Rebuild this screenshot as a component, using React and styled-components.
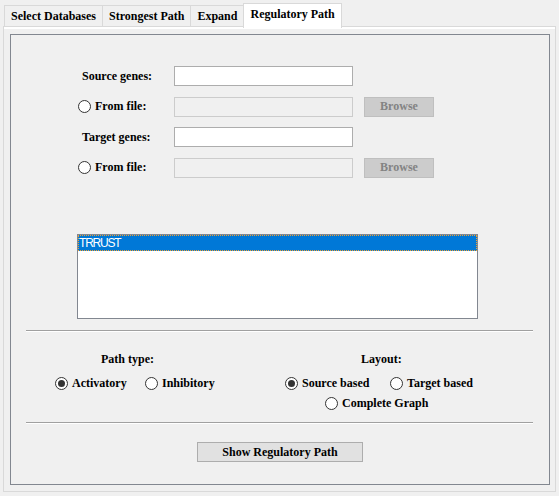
import React from 'react';
import styled, { createGlobalStyle } from 'styled-components';

const Global = createGlobalStyle`
  html, body { margin: 0; padding: 0; background: #f0f0f0; }
  body { font-family: "Liberation Serif", "Times New Roman", serif; color: #000; }
`;

const Window = styled.div`
  width: 559px;
  height: 496px;
  box-sizing: border-box;
  padding: 3px 0 4px;
  display: flex;
  flex-direction: column;
  background: #f0f0f0;
`;

const TabBar = styled.div`
  display: flex;
  align-items: flex-end;
  height: 24px;
  padding-left: 4px;
  position: relative;
  z-index: 2;
`;

const Tab = styled.div`
  box-sizing: border-box;
  height: ${p => (p.$active ? '25px' : '22px')};
  margin: ${p => (p.$active ? '0 0 -1px -1px' : '0 0 0 -1px')};
  padding: ${p => (p.$active ? '0 6px 3px' : '0 6px')};
  border: 1px solid #d9d9d9;
  border-bottom: ${p => (p.$active ? 'none' : '1px solid #d9d9d9')};
  background: ${p => (p.$active ? '#ffffff' : '#f0f0f0')};
  position: relative;
  z-index: ${p => (p.$active ? 1 : 0)};
  display: flex;
  align-items: center;
  font-size: 12px;
  font-weight: bold;
  white-space: nowrap;
  &:first-child { margin-left: 0; }
`;

const Panel = styled.div`
  flex: 1;
  margin: -1px 3px 0;
  border: 1px solid #d9d9d9;
  box-shadow: inset 0 2px 0 #ffffff;
  padding: 7px 5px 6px 6px;
  display: flex;
  flex-direction: column;
  background: #f0f0f0;
`;

const GroupBox = styled.div`
  flex: 1;
  border: 1px solid #828790;
  display: flex;
  flex-direction: column;
`;

const Form = styled.div`
  margin: 31px 0 0 67px;
  display: grid;
  grid-template-columns: 96px 179px 81px;
  grid-auto-rows: 20px;
  row-gap: 10.5px;
  align-items: center;
`;

const FieldLabel = styled.div`
  padding-left: 4px;
  font-size: 12px;
  font-weight: bold;
`;

const TextInput = styled.div`
  box-sizing: border-box;
  height: 20px;
  border: 1px solid ${p => (p.$disabled ? '#cccccc' : '#adadad')};
  background: ${p => (p.$disabled ? '#f0f0f0' : '#ffffff')};
`;

const BrowseButton = styled.div`
  box-sizing: border-box;
  margin-left: 11px;
  width: 70px;
  height: 20px;
  border: 1px solid #bfbfbf;
  background: #cccccc;
  color: #838383;
  font-size: 12px;
  font-weight: bold;
  display: flex;
  align-items: center;
  justify-content: center;
`;

const RadioLabel = styled.div`
  display: flex;
  align-items: center;
  gap: 4px;
  font-size: 12px;
  font-weight: bold;
  white-space: nowrap;
`;

const RadioCircle = styled.span`
  box-sizing: border-box;
  width: 13px;
  height: 13px;
  border-radius: 50%;
  border: 1px solid #333333;
  background: #ffffff;
  display: flex;
  align-items: center;
  justify-content: center;
  flex: none;
  &::after {
    content: '';
    width: 7px;
    height: 7px;
    border-radius: 50%;
    background: #333333;
    display: ${p => (p.$checked ? 'block' : 'none')};
  }
`;

const Radio = ({ checked, children }) => (
  <RadioLabel>
    <RadioCircle $checked={checked} />
    <span>{children}</span>
  </RadioLabel>
);

const ListBox = styled.div`
  box-sizing: border-box;
  margin: 56.5px 0 0 66px;
  width: 401px;
  height: 85px;
  border: 1px solid #828790;
  background: #ffffff;
`;

const ListItem = styled.div`
  box-sizing: border-box;
  height: 16px;
  background: ${p => (p.$selected ? '#0078d7' : 'transparent')};
  outline: ${p => (p.$selected ? '1px dotted #f0a030' : 'none')};
  outline-offset: -1px;
  color: ${p => (p.$selected ? '#ffffff' : '#000000')};
  font-family: "Liberation Sans", Arial, sans-serif;
  font-size: 12px;
  letter-spacing: -1.2px;
  line-height: 16px;
  padding-left: 1px;
`;

const Separator = styled.div`
  margin: ${p => p.$top}px 16px 0 15px;
  height: 0;
  border-top: 1px solid #a0a0a0;
  border-bottom: 1px solid #ffffff;
`;

const Options = styled.div`
  margin-top: 19px;
  display: flex;
`;

const OptionGroup = styled.div`
  margin-left: ${p => p.$left}px;
  width: ${p => p.$width}px;
  display: flex;
  flex-direction: column;
`;

const GroupTitle = styled.div`
  margin-left: ${p => p.$indent}px;
  height: 16px;
  line-height: 16px;
  font-size: 12px;
  font-weight: bold;
`;

const RadioRow = styled.div`
  margin: ${p => p.$top}px 0 0 ${p => p.$indent || 0}px;
  height: 16px;
  display: flex;
  align-items: center;
`;

const RadioSlot = styled.div`
  width: ${p => (p.$width ? `${p.$width}px` : 'auto')};
`;

const Footer = styled.div`
  margin-top: 18px;
  display: flex;
  justify-content: center;
`;

const ActionButton = styled.div`
  box-sizing: border-box;
  width: 166px;
  height: 20px;
  border: 1px solid #adadad;
  background: #e1e1e1;
  font-size: 12px;
  font-weight: bold;
  display: flex;
  align-items: center;
  justify-content: center;
`;

export default function App() {
  return (
    <>
      <Global />
      <Window>
        <TabBar>
          <Tab>Select Databases</Tab>
          <Tab>Strongest Path</Tab>
          <Tab>Expand</Tab>
          <Tab $active>Regulatory Path</Tab>
        </TabBar>
        <Panel>
          <GroupBox>
            <Form>
              <FieldLabel>Source genes:</FieldLabel>
              <TextInput />
              <div />
              <Radio>From file:</Radio>
              <TextInput $disabled />
              <BrowseButton>Browse</BrowseButton>
              <FieldLabel>Target genes:</FieldLabel>
              <TextInput />
              <div />
              <Radio>From file:</Radio>
              <TextInput $disabled />
              <BrowseButton>Browse</BrowseButton>
            </Form>
            <ListBox>
              <ListItem $selected>TRRUST</ListItem>
            </ListBox>
            <Separator $top={11} />
            <Options>
              <OptionGroup $left={44} $width={230}>
                <GroupTitle $indent={46}>Path type:</GroupTitle>
                <RadioRow $top={8}>
                  <RadioSlot $width={90}><Radio checked>Activatory</Radio></RadioSlot>
                  <RadioSlot><Radio>Inhibitory</Radio></RadioSlot>
                </RadioRow>
              </OptionGroup>
              <OptionGroup $left={0} $width={220}>
                <GroupTitle $indent={76}>Layout:</GroupTitle>
                <RadioRow $top={8}>
                  <RadioSlot $width={105}><Radio checked>Source based</Radio></RadioSlot>
                  <RadioSlot><Radio>Target based</Radio></RadioSlot>
                </RadioRow>
                <RadioRow $top={4} $indent={40}>
                  <Radio>Complete Graph</Radio>
                </RadioRow>
              </OptionGroup>
            </Options>
            <Separator $top={11} />
            <Footer>
              <ActionButton>Show Regulatory Path</ActionButton>
            </Footer>
          </GroupBox>
        </Panel>
      </Window>
    </>
  );
}
